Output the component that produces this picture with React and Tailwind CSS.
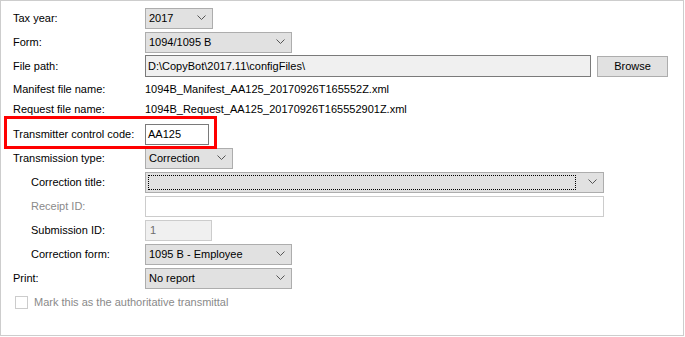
import React from "react";

function Chevron() {
  return (
    <svg width="9" height="6" viewBox="0 0 9 6" className="shrink-0">
      <polyline points="0.5,0.5 4.5,4.5 8.5,0.5" fill="none" stroke="#555" strokeWidth="1" />
    </svg>
  );
}

function Select({ value, className = "", focused = false }) {
  return (
    <div
      className={`h-[21px] flex items-center bg-[#e1e1e1] border border-[#adadad] pr-[6px] ${className}`}
    >
      {focused ? (
        <div className="flex-1 h-[15px] ml-[2px] mr-[12px] border border-dotted border-black" />
      ) : (
        <span className="flex-1 pl-[3px] truncate">{value}</span>
      )}
      <Chevron />
    </div>
  );
}

function Row({ label, children, indent = false, disabled = false, className = "h-[24px]" }) {
  return (
    <div className={`flex items-center whitespace-nowrap ${className}`}>
      <div
        className={`w-[132px] shrink-0 ${indent ? "pl-[18px]" : ""} ${
          disabled ? "text-[#8a8a8a]" : "text-black"
        }`}
      >
        {label}
      </div>
      {children}
    </div>
  );
}

export default function App() {
  return (
    <div className="w-[685px] h-[337px] bg-white">
      <div
        className="w-[684px] h-[336px] border border-[#cdcdcd] pl-[12px] pt-[5px] text-[11px] text-black"
        style={{ fontFamily: '"Liberation Sans", Arial, sans-serif' }}
      >
        <Row label="Tax year:">
          <Select value="2017" className="w-[68px]" />
        </Row>
        <Row label="Form:">
          <Select value="1094/1095 B" className="w-[147px]" />
        </Row>
        <Row label="File path:">
          <div className="w-[446px] h-[22px] flex items-center bg-[#f0f0f0] border border-[#7a7a7a] pl-[2px]">
            D:\CopyBot\2017.11\configFiles\
          </div>
          <button
            type="button"
            className="ml-[6px] w-[71px] h-[21px] flex items-center justify-center bg-[#e1e1e1] border border-[#adadad]"
          >
            Browse
          </button>
        </Row>
        <Row label="Manifest file name:" className="h-[22px]">
          <span>1094B_Manifest_AA125_20170926T165552Z.xml</span>
        </Row>
        <Row label="Request file name:" className="h-[18px]">
          <span>1094B_Request_AA125_20170926T165552901Z.xml</span>
        </Row>
        <div className="relative mt-[4px]">
          <div className="absolute left-[-9px] top-[-6px] w-[213px] h-[33px] border-[3px] border-[#ff0000] pointer-events-none" />
          <Row label="Transmitter control code:">
            <div className="w-[64px] h-[21px] flex items-center bg-white border border-[#7a7a7a] pl-[2px]">
              AA125
            </div>
          </Row>
        </div>
        <Row label="Transmission type:">
          <Select value="Correction" className="w-[88px]" />
        </Row>
        <Row label="Correction title:" indent>
          <Select focused className="w-[459px]" />
        </Row>
        <Row label="Receipt ID:" indent disabled>
          <div className="w-[459px] h-[21px] bg-white border border-[#cccccc]" />
        </Row>
        <Row label="Submission ID:" indent>
          <div className="w-[67px] h-[21px] flex items-center bg-[#f0f0f0] border border-[#cccccc] pl-[4px] text-[#6d6d6d]">
            1
          </div>
        </Row>
        <Row label="Correction form:" indent>
          <Select value="1095 B - Employee" className="w-[147px]" />
        </Row>
        <Row label="Print:">
          <Select value="No report" className="w-[147px]" />
        </Row>
        <div className="flex items-center h-[24px] pl-[2px] text-[#8a8a8a]">
          <div className="w-[13px] h-[13px] border border-[#cccccc] bg-white mr-[6px]" />
          <span>Mark this as the authoritative transmittal</span>
        </div>
      </div>
    </div>
  );
}
